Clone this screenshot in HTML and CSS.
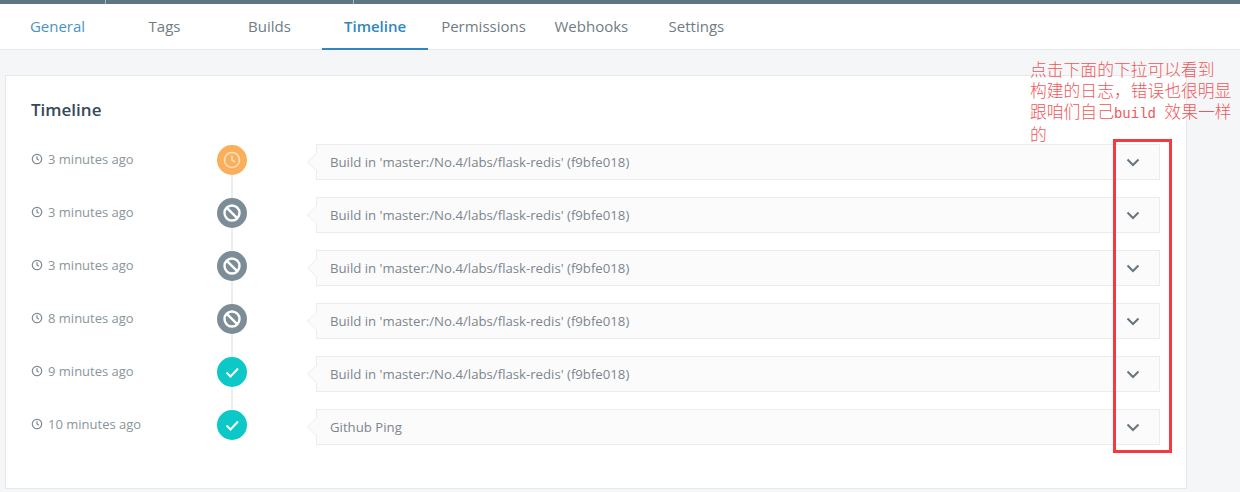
FILE: index.html
```html
<!DOCTYPE html>
<html lang="en">
<head>
<meta charset="utf-8">
<title>Timeline</title>
<link rel="stylesheet" href="styles.css">
</head>
<body>
<div class="topbar"><span class="seg seg-first"></span><span class="seg seg-second"></span></div>
<nav class="tabs">
  <a class="tab tab-general">General</a>
  <a class="tab">Tags</a>
  <a class="tab">Builds</a>
  <a class="tab tab-active">Timeline</a>
  <a class="tab">Permissions</a>
  <a class="tab">Webhooks</a>
  <a class="tab">Settings</a>
</nav>
<main class="content">
  <section class="card">
    <h2 class="card-title">Timeline</h2>
    <ul class="timeline">
      <li class="row">
        <span class="time"><svg class="clock" viewBox="0 0 12 12"><circle cx="6" cy="6" r="4.7"/><path d="M6 3.2V6l1.9 1.2"/></svg>3 minutes ago</span>
        <span class="marker marker-pending"><svg viewBox="0 0 30 30"><circle cx="15" cy="15" r="7.5"/><path d="M15 10.5V15l3 2"/></svg></span>
        <div class="entry"><span>Build in 'master:/No.4/labs/flask-redis' (f9bfe018)</span><svg class="chevron" viewBox="0 0 14 9"><path d="M1.5 1.5 7 7l5.5-5.5"/></svg></div>
      </li>
      <li class="row">
        <span class="time"><svg class="clock" viewBox="0 0 12 12"><circle cx="6" cy="6" r="4.7"/><path d="M6 3.2V6l1.9 1.2"/></svg>3 minutes ago</span>
        <span class="marker marker-cancel"><svg viewBox="0 0 30 30"><circle cx="15" cy="15" r="7.5"/><path d="M9.8 9.8l10.4 10.4"/></svg></span>
        <div class="entry"><span>Build in 'master:/No.4/labs/flask-redis' (f9bfe018)</span><svg class="chevron" viewBox="0 0 14 9"><path d="M1.5 1.5 7 7l5.5-5.5"/></svg></div>
      </li>
      <li class="row">
        <span class="time"><svg class="clock" viewBox="0 0 12 12"><circle cx="6" cy="6" r="4.7"/><path d="M6 3.2V6l1.9 1.2"/></svg>3 minutes ago</span>
        <span class="marker marker-cancel"><svg viewBox="0 0 30 30"><circle cx="15" cy="15" r="7.5"/><path d="M9.8 9.8l10.4 10.4"/></svg></span>
        <div class="entry"><span>Build in 'master:/No.4/labs/flask-redis' (f9bfe018)</span><svg class="chevron" viewBox="0 0 14 9"><path d="M1.5 1.5 7 7l5.5-5.5"/></svg></div>
      </li>
      <li class="row">
        <span class="time"><svg class="clock" viewBox="0 0 12 12"><circle cx="6" cy="6" r="4.7"/><path d="M6 3.2V6l1.9 1.2"/></svg>8 minutes ago</span>
        <span class="marker marker-cancel"><svg viewBox="0 0 30 30"><circle cx="15" cy="15" r="7.5"/><path d="M9.8 9.8l10.4 10.4"/></svg></span>
        <div class="entry"><span>Build in 'master:/No.4/labs/flask-redis' (f9bfe018)</span><svg class="chevron" viewBox="0 0 14 9"><path d="M1.5 1.5 7 7l5.5-5.5"/></svg></div>
      </li>
      <li class="row">
        <span class="time"><svg class="clock" viewBox="0 0 12 12"><circle cx="6" cy="6" r="4.7"/><path d="M6 3.2V6l1.9 1.2"/></svg>9 minutes ago</span>
        <span class="marker marker-ok"><svg viewBox="0 0 30 30"><path d="M9.5 15.5l4 4 7.5-8"/></svg></span>
        <div class="entry"><span>Build in 'master:/No.4/labs/flask-redis' (f9bfe018)</span><svg class="chevron" viewBox="0 0 14 9"><path d="M1.5 1.5 7 7l5.5-5.5"/></svg></div>
      </li>
      <li class="row">
        <span class="time"><svg class="clock" viewBox="0 0 12 12"><circle cx="6" cy="6" r="4.7"/><path d="M6 3.2V6l1.9 1.2"/></svg>10 minutes ago</span>
        <span class="marker marker-ok"><svg viewBox="0 0 30 30"><path d="M9.5 15.5l4 4 7.5-8"/></svg></span>
        <div class="entry"><span>Github Ping</span><svg class="chevron" viewBox="0 0 14 9"><path d="M1.5 1.5 7 7l5.5-5.5"/></svg></div>
      </li>
    </ul>
  </section>
</main>
<p class="note">点击下面的下拉可以看到<br>构建的日志，错误也很明显<br>跟咱们自己<span class="note-latin">build </span>效果一样<br>的</p>
<div class="highlight"></div>
</body>
</html>
```

FILE: styles.css
```css
* { box-sizing: border-box; }
html, body { margin: 0; padding: 0; }
body {
  width: 1240px;
  height: 492px;
  overflow: hidden;
  position: relative;
  background: #f5f6f8;
  font-family: "Open Sans", "Liberation Sans", sans-serif;
}
.topbar {
  display: flex;
  height: 4px;
  background: #5f7682;
}
.seg {
  height: 4px;
  border-right: 1px solid #a9b6bd;
}
.seg-first { width: 106px; }
.seg-second { width: 248px; }
.tabs {
  display: flex;
  height: 46px;
  padding-left: 5px;
  background: #fff;
  border-bottom: 1px solid #e6e8eb;
}
.tab {
  min-width: 105px;
  padding: 0 13px;
  display: flex;
  align-items: center;
  justify-content: center;
  font-size: 15px;
  color: #6f7c85;
  border-bottom: 2px solid transparent;
  margin-bottom: -1px;
}
.tab-general { color: #4b93c3; min-width: 105px; margin-right: 2px; }
.tab-active {
  color: #2f86c1;
  font-weight: 600;
  border-bottom-color: #2f86c1;
  padding: 0 22px;
}
.content {
  padding: 25px 53px 0 5px;
}
.card {
  height: 414px;
  background: #fff;
  border: 1px solid #e6e8eb;
  padding: 22px 26px 0 25px;
}
.card-title {
  margin: 0 0 22px;
  font-size: 17px;
  line-height: 24px;
  font-weight: 600;
  color: #35495a;
}
.timeline {
  list-style: none;
  margin: 0;
  padding: 0;
  display: flex;
  flex-direction: column;
  gap: 17px;
}
.row {
  display: flex;
  height: 36px;
  position: relative;
}
.time {
  width: 185.5px;
  height: 30px;
  display: flex;
  align-items: center;
  gap: 5px;
  font-size: 13px;
  color: #8a959c;
}
.clock {
  width: 12px;
  height: 12px;
  fill: none;
  stroke: #7f8a91;
  stroke-width: 1.2;
}
.marker {
  width: 30px;
  height: 30px;
  margin-top: 1px;
  border-radius: 50%;
  position: relative;
  z-index: 1;
  flex: none;
}
.marker svg {
  display: block;
  width: 30px;
  height: 30px;
  fill: none;
  stroke: #fff;
  stroke-width: 2;
}
.marker-pending { background: #fbae5c; }
.marker-pending svg { stroke: #fde0bd; stroke-width: 1.6; }
.marker-cancel { background: #7c8d98; }
.marker-cancel svg { stroke-width: 2.4; }
.marker-ok { background: #0cc8c6; }
.row:not(:last-child)::before {
  content: "";
  position: absolute;
  left: 200px;
  top: 30px;
  width: 2px;
  height: 30px;
  background: #eceef0;
}
.entry {
  flex: 1;
  margin-left: 69.5px;
  height: 36px;
  display: flex;
  align-items: center;
  justify-content: space-between;
  padding: 0 19px 0 13px;
  position: relative;
  font-size: 13.2px;
  color: #7b868e;
  background: #fbfbfc;
  border: 1.5px solid #eaecee;
}
.entry::before {
  content: "";
  position: absolute;
  left: -7px;
  top: 10px;
  width: 13px;
  height: 13px;
  background: #fbfbfc;
  transform: rotate(45deg);
  border-left: 1.5px solid #f0f1f3;
  border-bottom: 1.5px solid #f0f1f3;
}
.entry > span { position: relative; }
.chevron {
  width: 14px;
  height: 9px;
  fill: none;
  stroke: #69747b;
  stroke-width: 2;
}
.note {
  position: absolute;
  left: 1030px;
  top: 60px;
  width: 208px;
  margin: 0;
  font-family: "Liberation Serif", "Noto Sans CJK SC", serif;
  font-size: 16.8px;
  font-weight: 300;
  line-height: 21px;
  color: #f0565a;
}
.note-latin {
  font-family: "Liberation Mono", monospace;
  font-size: 14px;
}
.highlight {
  position: absolute;
  left: 1113px;
  top: 139px;
  width: 59px;
  height: 314px;
  border: 3px solid #f5393c;
}
```
